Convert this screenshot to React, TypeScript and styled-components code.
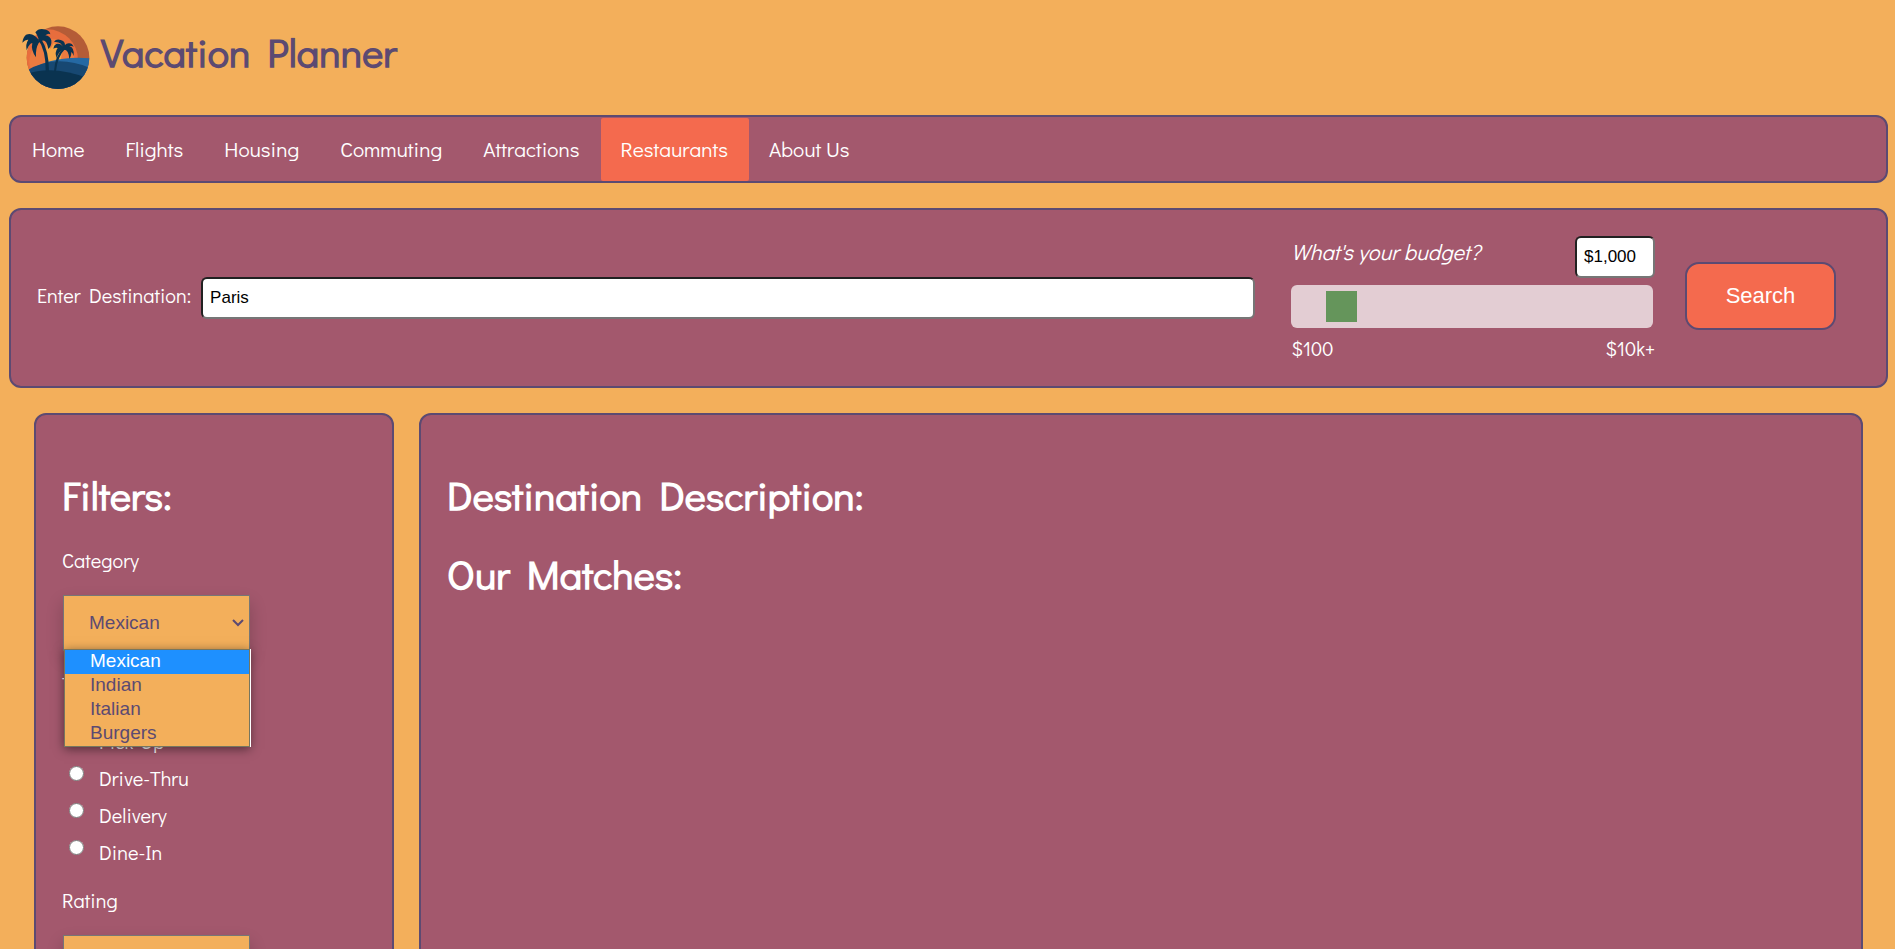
import React, { useState } from "react";
import styled, { createGlobalStyle } from "styled-components";

const color = {
  sand: "#f3af5b",
  plum: "#a3586d",
  violet: "#5c4a72",
  coral: "#f46a4e",
};

const GlobalStyle = createGlobalStyle`
  *, *::before, *::after { box-sizing: border-box; }
  body {
    margin: 0;
    background: ${color.sand};
    color: #fff;
    font: 20px/24px "Didact Gothic", Lato, sans-serif;
  }
`;

const Page = styled.div`
  padding: 0 7px 0 9px;
  height: 100vh;
  overflow: hidden;
`;

const Header = styled.header`
  display: flex;
  align-items: center;
  gap: 10px;
  height: 115px;
  padding: 0 12px 12px;
`;

const Logo = styled.svg`
  width: 70px;
  height: 66px;
  margin-top: 12px;
`;

const SiteName = styled.div`
  color: ${color.violet};
  font-size: 40px;
  line-height: 48px;
  font-weight: 700;
`;

const Panel = styled.section`
  background: ${color.plum};
  border: 2px solid ${color.violet};
  border-radius: 12px;
`;

const Nav = styled(Panel).attrs({ as: "nav" })`
  display: flex;
  padding: 1px 1px 0;
`;

const NavLink = styled.a<{ $active?: boolean }>`
  padding: 19px 21px 20px 20px;
  border-radius: 2px;
  color: #fff;
  font-size: 21px;
  text-decoration: none;
  background: ${(p) => (p.$active ? color.coral : "transparent")};
`;

const SearchBar = styled(Panel).attrs({ as: "form" })`
  display: flex;
  align-items: center;
  margin-top: 25px;
  padding: 25px 50px 25px 26px;
  height: 180px;
`;

const DestinationLabel = styled.label`
  margin: 0 10px 6px 0;
  white-space: nowrap;
`;

const TextField = styled.input`
  height: 42px;
  padding: 0 7px;
  border: 2px inset #767676;
  border-radius: 6px;
  background: #fff;
  color: #000;
  font: 17px/20px "Liberation Sans", Arial, sans-serif;
`;

const DestinationField = styled(TextField)`
  flex: 1;
  min-width: 0;
`;

const AmountField = styled(TextField)`
  width: 80px;
`;

const Budget = styled.div`
  width: 364px;
  margin: 0 30px 0 36px;
`;

const BudgetTop = styled.div`
  display: flex;
  justify-content: space-between;
  margin-bottom: 7px;
`;

const BudgetLabel = styled.label`
  font-size: 22px;
  line-height: 32px;
  font-style: italic;
`;

const BudgetSlider = styled.input`
  display: block;
  appearance: none;
  width: 362px;
  height: 43px;
  margin: 0;
  padding: 0 6px;
  border-radius: 6px;
  background: #e3cdd3;

  &::-webkit-slider-thumb {
    appearance: none;
    width: 31px;
    height: 31px;
    background: #65955b;
  }
`;

const BudgetScale = styled.div`
  display: flex;
  justify-content: space-between;
  margin-top: 8px;
`;

const SearchButton = styled.button`
  width: 151px;
  height: 68px;
  margin-bottom: 4px;
  border: 2px solid ${color.violet};
  border-radius: 14px;
  background: ${color.coral};
  color: #fff;
  font: 22px/26px "Liberation Sans", Arial, sans-serif;
`;

const Columns = styled.main`
  display: flex;
  align-items: stretch;
  gap: 25px;
  margin: 25px 25px 25px;
`;

const Filters = styled(Panel).attrs({ as: "aside" })`
  flex: 0 0 360px;
  padding: 25px 26px;
`;

const Results = styled(Panel)`
  flex: 1;
  padding: 25px 26px;
`;

const Heading = styled.h1`
  margin: 29px 0 27px;
  font-size: 40px;
  line-height: 52px;
  font-weight: 700;

  & + & { margin-top: 0; }
`;

const GroupName = styled.label`
  display: block;
  margin-bottom: 23px;
`;

const TypeGroup = styled.fieldset`
  margin: 21px 0 11px;
  padding: 0;
  border: 0;
`;

const TypeName = styled.legend`
  margin-bottom: 33px;
  padding: 0;
`;

const SelectHolder = styled.div`
  position: relative;
  width: 187px;
  margin-left: 1px;
`;

const Select = styled.select`
  appearance: none;
  display: block;
  width: 100%;
  height: 56px;
  padding: 0 25px;
  border: 1px solid #767676;
  border-radius: 0;
  background: ${color.sand};
  color: ${color.violet};
  box-shadow: 0 8px 16px rgba(0, 0, 0, 0.2);
  font: 19px/24px "Liberation Sans", Arial, sans-serif;
`;

const Chevron = styled.svg`
  position: absolute;
  right: 6px;
  top: 22px;
  width: 12px;
  height: 12px;
  pointer-events: none;
`;

const OptionList = styled.ul`
  position: absolute;
  z-index: 1;
  top: 54px;
  left: 1px;
  width: 186px;
  margin: 0;
  padding: 0;
  list-style: none;
  border: 1px solid #76765f;
  background: ${color.sand};
  box-shadow: 1px 0 0 #fff, 0 2px 10px rgba(0, 0, 0, 0.5);
  color: ${color.violet};
  font: 19px/22px "Liberation Sans", Arial, sans-serif;
`;

const Option = styled.li<{ $selected?: boolean }>`
  padding: 0 25px 2px;
  background: ${(p) => (p.$selected ? "#1e90ff" : "transparent")};
  color: ${(p) => (p.$selected ? "#fff" : "inherit")};
`;

const RadioRow = styled.label`
  display: flex;
  align-items: flex-start;
  gap: 15px;
  height: 37px;
  padding-left: 7px;
`;

const Radio = styled.input`
  width: 15px;
  height: 15px;
  margin: 0;
`;

const pages = ["Home", "Flights", "Housing", "Commuting", "Attractions", "Restaurants", "About Us"];
const cuisines = ["Mexican", "Indian", "Italian", "Burgers"];
const services = ["Pick-Up", "Drive-Thru", "Delivery", "Dine-In"];

function BeachLogo() {
  return (
    <Logo viewBox="33 29 210 198" aria-hidden="true">
      <defs>
        <clipPath id="disc"><circle cx="144" cy="127" r="94" /></clipPath>
      </defs>
      <g clipPath="url(#disc)">
        <rect x="40" y="25" width="210" height="205" fill="#b45c37" />
        <circle cx="112" cy="134" r="92" fill="#e86d3d" />
        <circle cx="126" cy="138" r="68" fill="#ec7b40" />
        <path d="M112 150L108 84L122 100L132 82L142 98L158 96L150 150Z" fill="#f4a647" />
        <path d="M45 172Q130 116 250 130V230H45Z" fill="#2569a3" />
        <path d="M45 169Q135 112 245 160V230H45Z" fill="#174872" />
        <path d="M45 178Q130 145 250 195V230H45Z" fill="#0a3350" />
      </g>
      <g fill="#0a3350">
        <path d="M84 72Q108 105 107 168H117Q117 104 93 70Z" />
        <path d="M161 97Q135 120 132 168H138Q142 123 166 100Z" />
        <path d="M87 76Q71 50 48 58Q39 65 37 82Q46 72 55 73Q46 86 50 105Q58 84 67 83Q62 104 78 126Q76 100 86 83Q108 62 115 101Q126 92 124 75Q120 62 106 60Q116 52 121 57Q120 46 108 43Q86 36 76 51Q82 58 87 76Z" />
        <path d="M160 98Q154 83 139 86Q131 90 130 100Q138 95 143 98Q133 111 140 128Q145 109 160 103Q176 101 178 131Q186 118 183 110Q189 113 191 122Q194 97 178 92Q187 91 191 94Q186 83 176 84Q169 85 165 89Q165 77 152 74Q138 70 132 80Q154 77 160 98Z" />
      </g>
    </Logo>
  );
}

function FilterChevron() {
  return (
    <Chevron viewBox="0 0 12 12" aria-hidden="true">
      <path d="M1 3L6 8L11 3" fill="none" stroke={color.violet} strokeWidth="2" />
    </Chevron>
  );
}

export default function App() {
  const [budget, setBudget] = useState(1000);
  const [category, setCategory] = useState("Mexican");

  return (
    <Page>
      <GlobalStyle />
      <Header>
        <BeachLogo />
        <SiteName>Vacation Planner</SiteName>
      </Header>

      <Nav>
        {pages.map((name) => (
          <NavLink key={name} href="#" $active={name === "Restaurants"}>{name}</NavLink>
        ))}
      </Nav>

      <SearchBar>
        <DestinationLabel htmlFor="destination">Enter Destination:</DestinationLabel>
        <DestinationField id="destination" type="text" defaultValue="Paris" />
        <Budget>
          <BudgetTop>
            <BudgetLabel htmlFor="budget">What's your budget?</BudgetLabel>
            <AmountField
              type="text"
              aria-label="Budget amount"
              readOnly
              value={"$" + budget.toLocaleString("en-US")}
            />
          </BudgetTop>
          <BudgetSlider
            id="budget"
            type="range"
            min={100}
            max={10000}
            step={100}
            value={budget}
            onChange={(e) => setBudget(Number(e.target.value))}
          />
          <BudgetScale>
            <span>$100</span>
            <span>$10k+</span>
          </BudgetScale>
        </Budget>
        <SearchButton type="button">Search</SearchButton>
      </SearchBar>

      <Columns>
        <Filters>
          <Heading>Filters:</Heading>
          <GroupName htmlFor="category">Category</GroupName>
          <SelectHolder>
            <Select id="category" value={category} onChange={(e) => setCategory(e.target.value)}>
              {cuisines.map((c) => <option key={c}>{c}</option>)}
            </Select>
            <FilterChevron />
            <OptionList role="listbox" aria-label="Category">
              {cuisines.map((c) => (
                <Option
                  key={c}
                  role="option"
                  aria-selected={c === category}
                  $selected={c === category}
                  onClick={() => setCategory(c)}
                >
                  {c}
                </Option>
              ))}
            </OptionList>
          </SelectHolder>
          <TypeGroup>
            <TypeName>Type</TypeName>
            {services.map((s) => (
              <RadioRow key={s}>
                <Radio type="radio" name="service" value={s} />
                {s}
              </RadioRow>
            ))}
          </TypeGroup>
          <GroupName htmlFor="rating">Rating</GroupName>
          <SelectHolder>
            <Select id="rating">
              <option>5 Stars</option>
              <option>4 Stars</option>
              <option>3 Stars</option>
            </Select>
            <FilterChevron />
          </SelectHolder>
        </Filters>
        <Results>
          <Heading>Destination Description:</Heading>
          <Heading>Our Matches:</Heading>
        </Results>
      </Columns>
    </Page>
  );
}
